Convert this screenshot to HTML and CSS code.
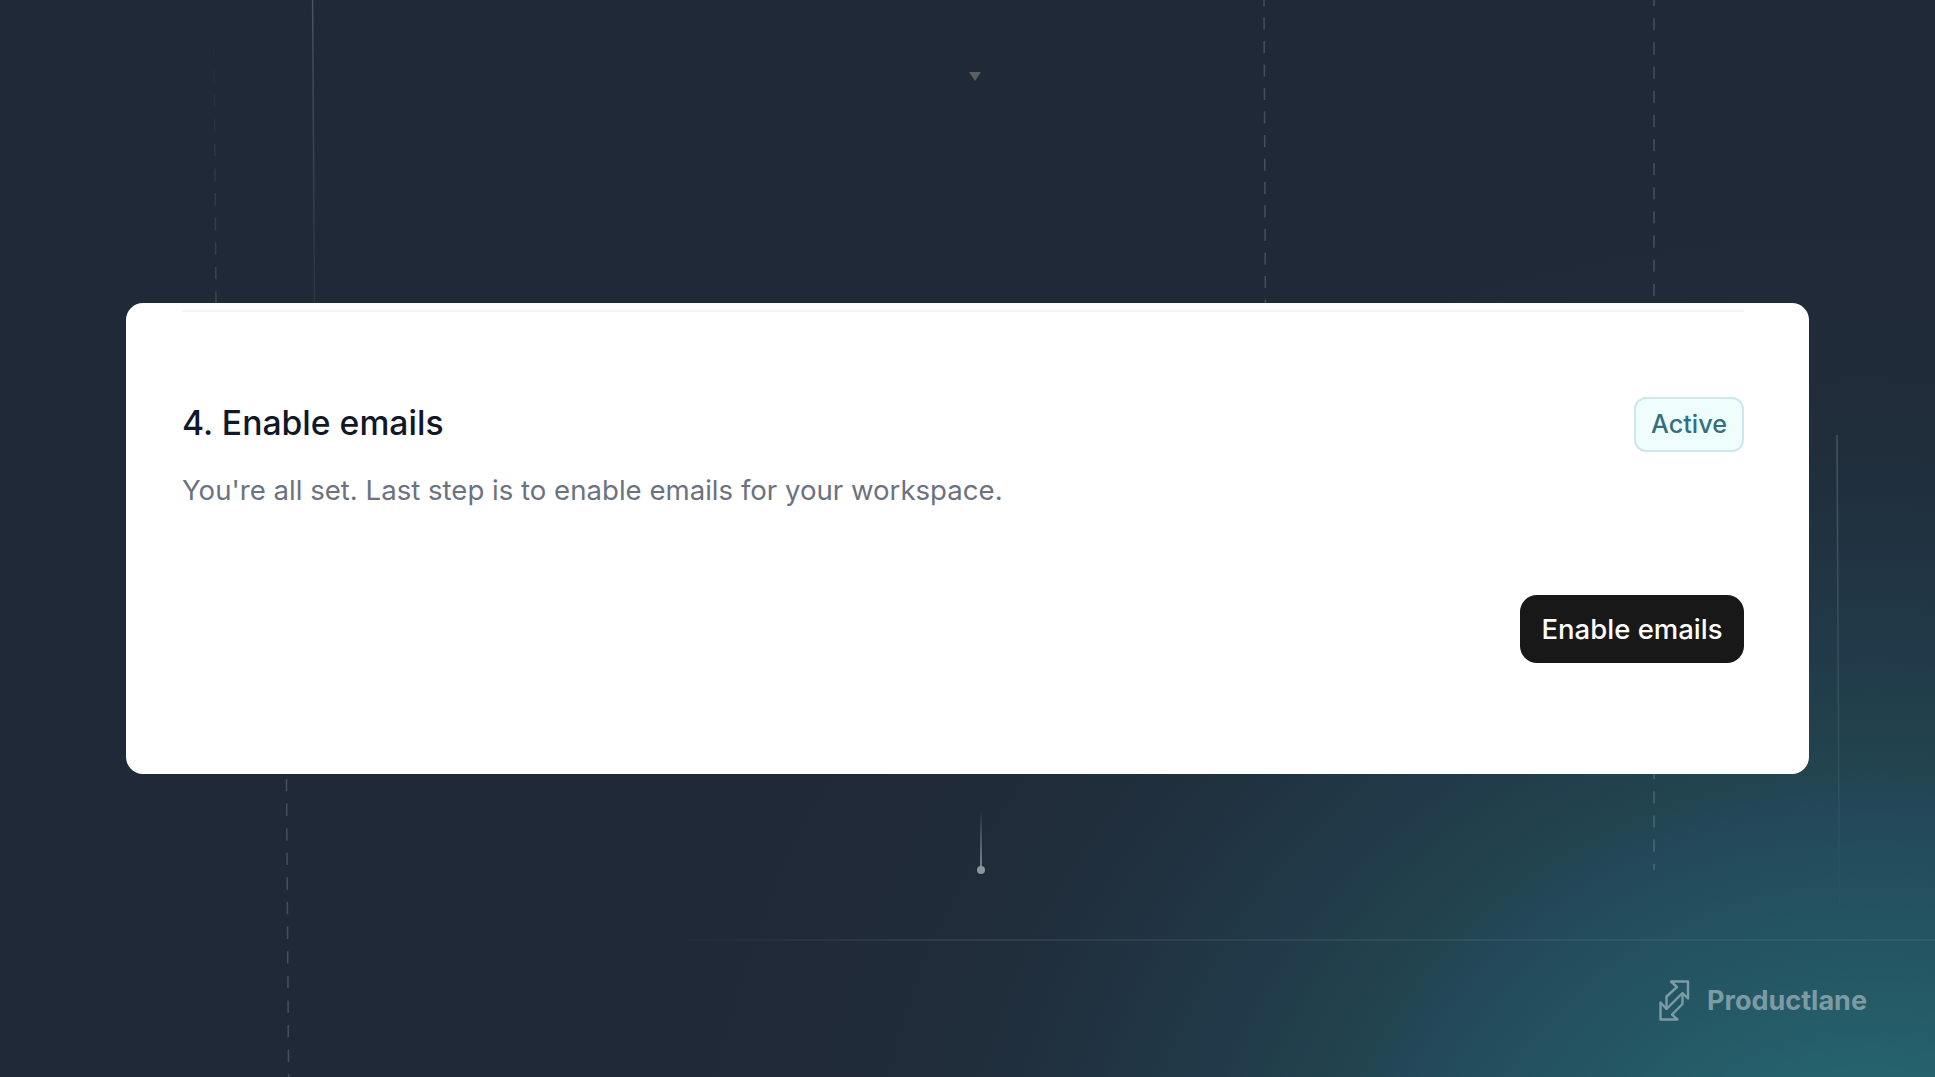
FILE: index.html
```html
<!DOCTYPE html>
<html lang="en">
<head>
    <meta charset="UTF-8">
    <title>Enable emails - Productlane</title>
    <link rel="stylesheet" href="styles.css">
</head>
<body>
    <svg class="backdrop" viewBox="0 0 1935 1077" fill="none" aria-hidden="true">
        <defs>
            <linearGradient id="fadeIn" gradientUnits="userSpaceOnUse" x1="0" y1="25" x2="0" y2="303">
                <stop offset="0" stop-color="#fff" stop-opacity="0"/>
                <stop offset="1" stop-color="#fff" stop-opacity=".13"/>
            </linearGradient>
            <linearGradient id="fadeOut" gradientUnits="userSpaceOnUse" x1="0" y1="0" x2="0" y2="330">
                <stop offset="0" stop-color="#fff" stop-opacity=".2"/>
                <stop offset="1" stop-color="#fff" stop-opacity=".04"/>
            </linearGradient>
            <linearGradient id="fadeSide" gradientUnits="userSpaceOnUse" x1="0" y1="434" x2="0" y2="930">
                <stop offset="0" stop-color="#fff" stop-opacity=".18"/>
                <stop offset="1" stop-color="#fff" stop-opacity="0"/>
            </linearGradient>
            <linearGradient id="fadePin" gradientUnits="userSpaceOnUse" x1="0" y1="810" x2="0" y2="868">
                <stop offset="0" stop-color="#fff" stop-opacity="0"/>
                <stop offset="1" stop-color="#fff" stop-opacity=".42"/>
            </linearGradient>
            <linearGradient id="fadeRow" gradientUnits="userSpaceOnUse" x1="660" y1="0" x2="1935" y2="0">
                <stop offset="0" stop-color="#fff" stop-opacity="0"/>
                <stop offset=".2" stop-color="#fff" stop-opacity=".1"/>
                <stop offset="1" stop-color="#fff" stop-opacity=".06"/>
            </linearGradient>
        </defs>
        <path d="M214 45.5L216 303" stroke="url(#fadeIn)" stroke-width="1.5" stroke-dasharray="12.3 12.3"/>
        <path d="M312.6 0L314.5 303" stroke="url(#fadeOut)" stroke-width="1.4"/>
        <path class="dashed" d="M1264 -6L1265.4 303" stroke-dasharray="12 11.5"/>
        <path class="dashed" d="M1654 -6V870" stroke-dasharray="12.1 12.06"/>
        <path class="dashed" d="M286.5 779L288.6 1077" stroke-dasharray="12.3 12.3"/>
        <path d="M1837 435L1839.5 930" stroke="url(#fadeSide)" stroke-width="1.5"/>
        <path d="M660 940H1935" stroke="url(#fadeRow)" stroke-width="1.5"/>
        <path d="M969 72H981L975 81Z" fill="#5c5e60"/>
        <path d="M981 810V867" stroke="url(#fadePin)" stroke-width="2"/>
        <circle cx="981" cy="870" r="4" fill="#8e949c"/>
    </svg>

    <main class="card">
        <div class="card-header">
            <h1 class="title">4. Enable emails</h1>
            <span class="badge">Active</span>
        </div>
        <p class="description">You're all set. Last step is to enable emails for your workspace.</p>
        <div class="actions">
            <button type="button" class="enable-btn">Enable emails</button>
        </div>
    </main>

    <footer class="brand">
        <svg class="brand-icon" viewBox="0 0 32 42" fill="none">
            <path d="M12 1.5H29V18.5L23.5 13L7.5 29V16.5L18 7Z"/>
            <path d="M23.5 13V24L13 34.5L18.5 39.5H1.5V22.5L7.5 29"/>
        </svg>
        <span class="brand-name">Productlane</span>
    </footer>
</body>
</html>
```
FILE: styles.css
```css
* {
    box-sizing: border-box;
}
body {
    margin: 0;
    height: 1077px;
    padding: 303px 126px 0;
    overflow: hidden;
    font-family: 'Inter', 'Liberation Sans', sans-serif;
    background: radial-gradient(ellipse 1220px 1050px at 1870px 1240px, #256772 0%, #25636e 15%, #245562 28%, #23485a 41%, #22444f 45%, #213a49 56%, #20303e 70%, #202b39 83%, #202937 97%);
}
.backdrop {
    position: absolute;
    top: 0;
    left: 0;
    width: 1935px;
    height: 1077px;
    z-index: -1;
}
.dashed {
    stroke: #fff;
    stroke-opacity: .18;
    stroke-width: 1.5;
}
.card {
    height: 471px;
    padding: 7px 65px 0 56px;
    background: #fff;
    border-radius: 17px;
}
.card-header {
    display: flex;
    justify-content: space-between;
    align-items: flex-start;
    height: 148px;
    padding-top: 85px;
    border-top: 2px solid #f4f4f5;
}
.title {
    margin: 5px 0 0;
    font-size: 33.7px;
    line-height: 41px;
    font-weight: 500;
    color: #111827;
}
.badge {
    width: 110px;
    height: 55px;
    border: 2px solid #cde7ea;
    border-radius: 12px;
    background: #f0fdfd;
    color: #327080;
    font-size: 25.2px;
    line-height: 50px;
    font-weight: 500;
    text-align: center;
}
.description {
    margin: 12px 0 0;
    font-size: 27.6px;
    line-height: 40px;
    color: #6b7280;
}
.actions {
    display: flex;
    justify-content: flex-end;
    margin-top: 85px;
}
.enable-btn {
    width: 224px;
    height: 68px;
    padding: 0;
    border: none;
    border-radius: 17px;
    background: #181818;
    color: #fff;
    font-family: inherit;
    font-size: 27.5px;
    font-weight: 500;
}
.brand {
    display: flex;
    justify-content: flex-end;
    align-items: center;
    gap: 16px;
    margin-top: 206px;
    margin-right: -58px;
    color: #7d9ba4;
}
.brand-icon {
    width: 32px;
    height: 42px;
}
.brand-icon path {
    stroke: #7d9ba4;
    stroke-width: 2.4;
    stroke-linejoin: round;
}
.brand-name {
    font-size: 27px;
    line-height: 42px;
    font-weight: 700;
}
```
